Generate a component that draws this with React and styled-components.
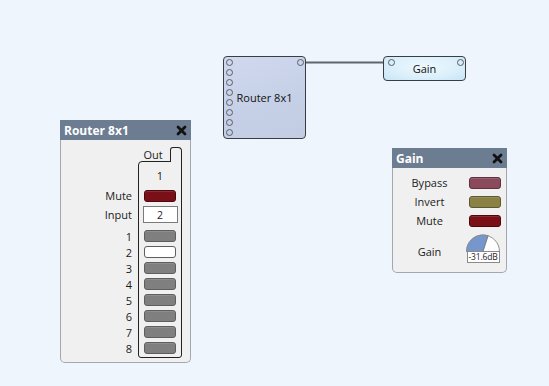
import React from "react";
import styled, { createGlobalStyle } from "styled-components";

const Global = createGlobalStyle`
  html, body { margin: 0; padding: 0; }
  body { background: #eef5fc; font-family: "Open Sans", "Noto Sans", sans-serif; color: #1b1b1b; }
`;

const Canvas = styled.div`
  position: relative;
  width: 549px;
  height: 386px;
  overflow: hidden;
  background: #eef5fc;
`;

const Wires = styled.svg`
  position: absolute;
  left: 0;
  top: 0;
  pointer-events: none;
`;

const Node = styled.div`
  position: absolute;
  left: ${(p) => p.$x}px;
  top: ${(p) => p.$y}px;
  width: ${(p) => p.$w}px;
  height: ${(p) => p.$h}px;
  box-sizing: border-box;
  border: 1px solid #3a3d42;
  border-radius: 4px;
  background: ${(p) => p.$bg};
  display: flex;
  align-items: center;
  justify-content: center;
  font-size: 11px;
  color: #111;
`;

const Port = styled.span`
  display: block;
  width: 7px;
  height: 7px;
  box-sizing: border-box;
  border: 1px solid #5a5e66;
  border-radius: 50%;
`;

const PortColumn = styled.div`
  position: absolute;
  left: 2px;
  top: 2px;
  display: flex;
  flex-direction: column;
  gap: 3px;
`;

const PortPin = styled.div`
  position: absolute;
  top: 2px;
  ${(p) => (p.$side === "left" ? "left: 4px;" : "right: 1px;")}
`;

const Panel = styled.div`
  position: absolute;
  left: ${(p) => p.$x}px;
  top: ${(p) => p.$y}px;
  width: ${(p) => p.$w}px;
  height: ${(p) => p.$h}px;
  display: flex;
  flex-direction: column;
`;

const Header = styled.div`
  height: 20px;
  flex: none;
  background: #6c7d92;
  display: flex;
  align-items: center;
  justify-content: space-between;
  padding: 0 4px 0 4px;
  color: #fff;
  font-weight: 700;
  font-size: 12px;
`;

const Body = styled.div`
  flex: 1;
  background: #f0f0f0;
  border: 1px solid #a3a8b0;
  border-top: none;
  border-radius: 0 0 5px 5px;
  box-sizing: border-box;
`;

const RouterBody = styled(Body)`
  display: flex;
  justify-content: flex-end;
  gap: 6px;
  padding: 7px 8px 0 0;
`;

const LabelColumn = styled.div`
  display: flex;
  flex-direction: column;
  align-items: flex-end;
  padding-top: 41px;
  font-size: 11px;
`;

const Row = styled.div`
  height: ${(p) => p.$h}px;
  margin-top: ${(p) => p.$mt || 0}px;
  display: flex;
  align-items: center;
  justify-content: ${(p) => (p.$center ? "center" : "flex-end")};
  flex: none;
`;

const OutColumn = styled.div`
  width: 44px;
  display: flex;
  flex-direction: column;
`;

const TabRow = styled.div`
  height: 14px;
  display: flex;
  align-items: flex-end;
`;

const OutLabel = styled.div`
  flex: 1;
  text-align: center;
  font-size: 11px;
  line-height: 13px;
  padding-right: 2px;
`;

const Tab = styled.div`
  width: 12px;
  height: 15px;
  box-sizing: border-box;
  border: 1px solid #222;
  border-bottom: none;
  border-radius: 3px 4px 0 0;
  background: #f0f0f0;
  margin-bottom: -1px;
  position: relative;
  z-index: 1;
`;

const Box = styled.div`
  border: 1px solid #222;
  border-radius: 4px 0 3px 3px;
  height: 197px;
  box-sizing: border-box;
  display: flex;
  flex-direction: column;
  font-size: 11px;
`;

const Btn = styled.div`
  width: 32px;
  height: 12px;
  box-sizing: border-box;
  border-radius: 3px;
  border: 1px solid ${(p) => p.$border};
  background: ${(p) => p.$bg};
  box-shadow: inset 0 1px 0 rgba(255, 255, 255, 0.12);
`;

const InputBox = styled.div`
  width: 35px;
  height: 17px;
  box-sizing: border-box;
  border: 1px solid #7a7a7a;
  background: #fff;
  display: flex;
  align-items: center;
  justify-content: center;
  font-size: 10.5px;
`;

const Close = styled.svg`
  display: block;
  margin-top: 1px;
`;

const GainBody = styled(Body)`
  display: grid;
  grid-template-columns: 73px 36px;
  grid-template-rows: 19px 19px 19px auto;
  align-content: start;
  padding-top: 5px;
  font-size: 11px;
`;

const GLabel = styled.div`
  display: flex;
  align-items: center;
  justify-content: center;
  ${(p) => p.$pt && `padding-top: ${p.$pt}px;`}
`;

const GCell = styled.div`
  display: flex;
  align-items: center;
  justify-content: flex-end;
  padding-right: 1px;
  ${(p) => p.$mt && `margin-top: ${p.$mt}px;`}
`;

const KnobWrap = styled.div`
  width: 36px;
  display: flex;
  flex-direction: column;
  align-items: center;
`;

const KnobDial = styled.svg`
  display: block;
`;

const KnobValue = styled.div`
  width: 33px;
  height: 12px;
  margin-top: -1px;
  box-sizing: border-box;
  border: 1px solid #8a8a8a;
  background: #fff;
  font-size: 8.5px;
  line-height: 10px;
  text-align: center;
  letter-spacing: -0.2px;
  position: relative;
`;

const GRAY = { bg: "#7f7f7f", border: "#5e5e5e" };

function CloseIcon() {
  return (
    <Close width="11" height="11" viewBox="0 0 11 11">
      <path d="M2 2 L9 9 M9 2 L2 9" stroke="#111" strokeWidth="2.8" strokeLinecap="round" />
    </Close>
  );
}

function Knob() {
  const cx = 18, cy = 19.5, r = 17;
  const a = (72 * Math.PI) / 180;
  const px = cx + r * Math.cos(a);
  const py = cy - r * Math.sin(a);
  return (
    <KnobWrap>
      <KnobDial width="36" height="20" viewBox="0 0 36 20">
        <path d={`M${cx - r} 20 L${cx - r} ${cy} A${r} ${r} 0 0 1 ${cx + r} ${cy} L${cx + r} 20 Z`} fill="#fff" />
        <path d={`M${cx} ${cy} L${cx - r} ${cy} L${cx - r} 20 L${cx} 20 Z`} fill="#7797cc" />
        <path d={`M${cx} ${cy} L${cx - r} ${cy} A${r} ${r} 0 0 1 ${px} ${py} Z`} fill="#7797cc" />
        <line x1={cx} y1={cy} x2={px} y2={py} stroke="#6a6a6a" strokeWidth="0.8" />
        <path d={`M${cx - r + 0.5} 20 L${cx - r + 0.5} ${cy} A${r - 0.5} ${r - 0.5} 0 0 1 ${cx + r - 0.5} ${cy} L${cx + r - 0.5} 20`} fill="none" stroke="#8c8c8c" strokeWidth="1" />
      </KnobDial>
      <KnobValue>-31.6dB</KnobValue>
    </KnobWrap>
  );
}

export default function App() {
  const outs = [1, 2, 3, 4, 5, 6, 7, 8];
  return (
    <>
      <Global />
      <Canvas>
        <Wires width="549" height="386">
          <line x1="303" y1="62.5" x2="389" y2="62.5" stroke="#5f666e" strokeWidth="2" />
        </Wires>

        <Node $x={223} $y={56} $w={83} $h={83} $bg="linear-gradient(160deg, #d0d9ee 0%, #c5cfe6 60%, #c2cce3 100%)">
          <PortColumn>
            {outs.map((i) => (
              <Port key={i} />
            ))}
          </PortColumn>
          <PortPin $side="right">
            <Port />
          </PortPin>
          Router 8x1
        </Node>

        <Node $x={383} $y={56} $w={83} $h={25} $bg="radial-gradient(ellipse at 50% 40%, #eef8fe 0%, #dcf0fb 55%, #c9e5f5 100%)">
          <PortPin $side="left">
            <Port />
          </PortPin>
          <PortPin $side="right">
            <Port />
          </PortPin>
          Gain
        </Node>

        <Panel $x={60} $y={120} $w={131} $h={243}>
          <Header>
            <span>Router 8x1</span>
            <CloseIcon />
          </Header>
          <RouterBody>
            <LabelColumn>
              <Row $h={15}>Mute</Row>
              <Row $h={23}>Input</Row>
              {outs.map((i) => (
                <Row key={i} $h={16} $mt={i === 1 ? 2 : 0}>
                  {i}
                </Row>
              ))}
            </LabelColumn>
            <OutColumn>
              <TabRow>
                <OutLabel>Out</OutLabel>
                <Tab />
              </TabRow>
              <Box>
                <Row $h={26} $center>1</Row>
                <Row $h={15} $center>
                  <Btn $bg="#7a0f18" $border="#4c070c" />
                </Row>
                <Row $h={23} $center>
                  <InputBox>2</InputBox>
                </Row>
                {outs.map((i) => (
                  <Row key={i} $h={16} $mt={i === 1 ? 2 : 0} $center>
                    {i === 2 ? (
                      <Btn $bg="#ffffff" $border="#5e5e5e" />
                    ) : (
                      <Btn $bg={GRAY.bg} $border={GRAY.border} />
                    )}
                  </Row>
                ))}
              </Box>
            </OutColumn>
          </RouterBody>
        </Panel>

        <Panel $x={392} $y={148} $w={115} $h={125}>
          <Header>
            <span>Gain</span>
            <CloseIcon />
          </Header>
          <GainBody>
            <GLabel>Bypass</GLabel>
            <GCell>
              <Btn $bg="#8a4a5b" $border="#5e3140" />
            </GCell>
            <GLabel>Invert</GLabel>
            <GCell>
              <Btn $bg="#8a8244" $border="#5d5830" />
            </GCell>
            <GLabel>Mute</GLabel>
            <GCell>
              <Btn $bg="#7a0f18" $border="#4c070c" />
            </GCell>
            <GLabel $pt={9}>Gain</GLabel>
            <GCell $mt={2}>
              <Knob />
            </GCell>
          </GainBody>
        </Panel>
      </Canvas>
    </>
  );
}
